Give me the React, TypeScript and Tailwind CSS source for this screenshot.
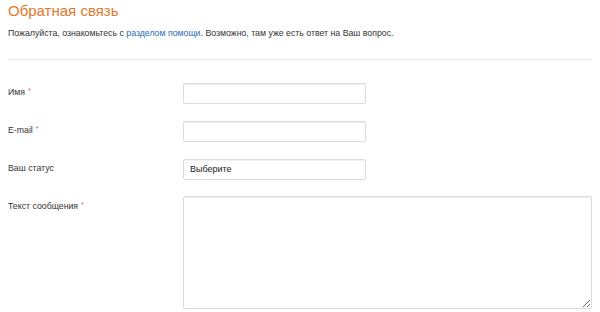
import React from "react";

const Star = () => <span className="ml-[3px] align-top text-[7px] text-[#d9534f]">*</span>;

const Row = ({ label, required, children }: { label: string; required?: boolean; children: React.ReactNode }) => (
  <div className="flex">
    <div className="w-[175px] shrink-0 pt-[3px] text-[8.75px] text-[#333]">
      {label}
      {required && <Star />}
    </div>
    {children}
  </div>
);

const inputCls =
  "h-[21px] w-[183px] rounded-[2px] border border-[#dcdcdc] bg-white px-1.5 text-[9px] text-[#222] shadow-[inset_0_1px_1px_rgba(0,0,0,0.06)] outline-none";

export default function App() {
  return (
    <div className="h-[312px] w-[600px] bg-white px-2 font-['Liberation_Sans',Arial,sans-serif]">
      <h1 className="pt-[1px] text-[15px] leading-[20px] text-[#e4782a]">Обратная связь</h1>
      <p className="mt-[6px] text-[8.75px] leading-[13px] text-[#333]">
        Пожалуйста, ознакомьтесь с <a className="text-[#2a6bb0]">разделом помощи</a>. Возможно, там уже есть ответ
        на Ваш вопрос.
      </p>
      <div className="mt-[19px] w-[584px] border-t border-[#e5e5e5]" />
      <div className="mt-[23px] flex flex-col gap-[17px]">
        <Row label="Имя" required>
          <input className={inputCls} />
        </Row>
        <Row label="E-mail" required>
          <input className={inputCls} />
        </Row>
        <Row label="Ваш статус">
          <div className={inputCls + " flex items-center"}>Выберите</div>
        </Row>
        <Row label="Текст сообщения" required>
          <textarea className="-mt-px h-[113px] w-[409px] rounded-[2px] border border-[#dcdcdc] bg-white shadow-[inset_0_1px_1px_rgba(0,0,0,0.06)] outline-none" />
        </Row>
      </div>
    </div>
  );
}
